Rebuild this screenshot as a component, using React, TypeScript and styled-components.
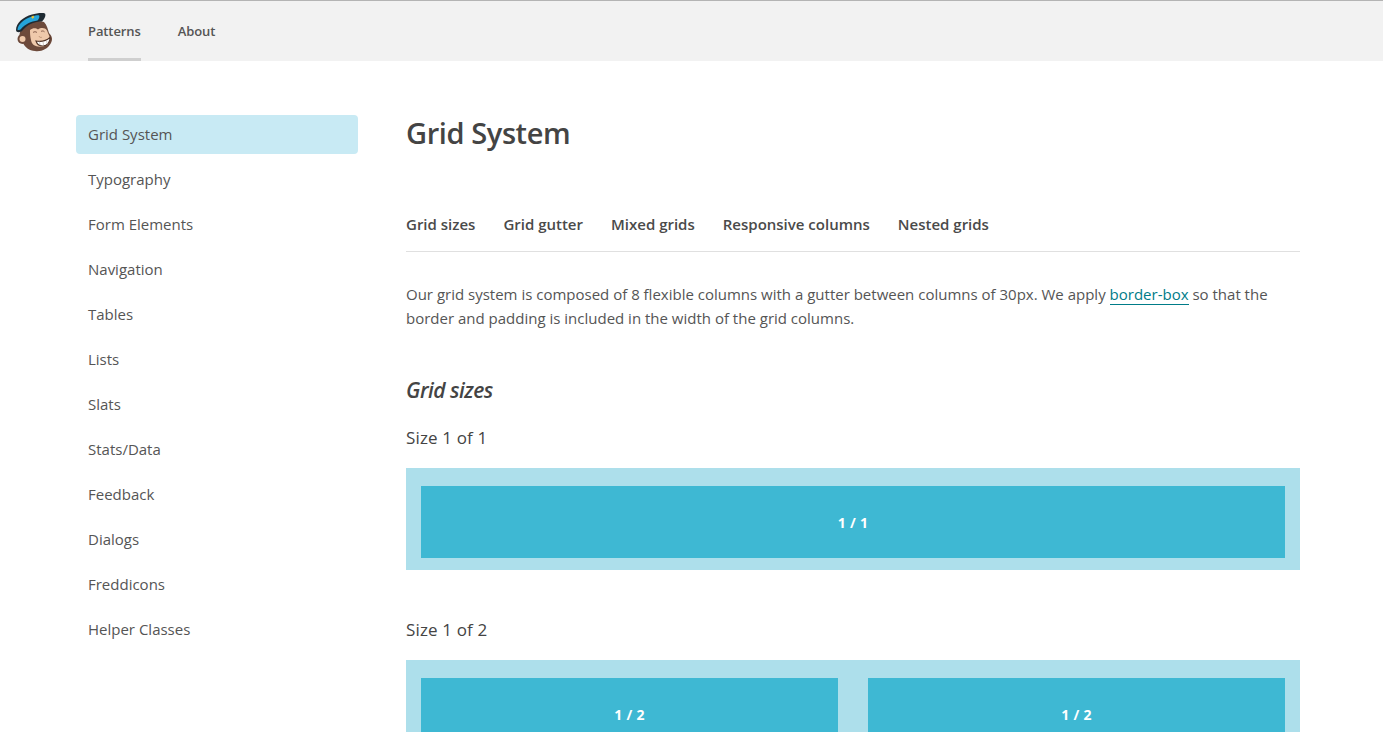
import React, { FC } from 'react';
import styled, { createGlobalStyle } from 'styled-components';

const GlobalStyle = createGlobalStyle`
  html, body {
    margin: 0;
    height: 100%;
    overflow: hidden;
    background: #fff;
    color: #444;
    font-family: "Open Sans", "Liberation Sans", sans-serif;
  }
  * { box-sizing: border-box; }
`;

const Header = styled.header`
  display: flex;
  align-items: stretch;
  height: 61px;
  padding-left: 15px;
  background: #f2f2f2;
  border-top: 1px solid #b4b4b4;
`;

const Logo = styled.svg`
  width: 38px;
  height: 40px;
  margin-top: 11px;
  margin-right: 35px;
  flex: none;
`;

const NavLink = styled.a<{ $active?: boolean }>`
  display: flex;
  align-items: center;
  height: 60px;
  margin-right: 37px;
  padding-top: 3px;
  font-size: 13px;
  font-weight: 600;
  letter-spacing: -0.1px;
  color: #555;
  border-bottom: 3px solid ${p => (p.$active ? '#cfcfcf' : 'transparent')};
`;

const Page = styled.div`
  display: flex;
  align-items: flex-start;
  gap: 48px;
  padding: 53px 83px 0 76px;
`;

const Sidebar = styled.nav`
  display: flex;
  flex-direction: column;
  gap: 6px;
  width: 282px;
  margin-top: 1px;
  flex: none;
`;

const SideItem = styled.a<{ $active?: boolean }>`
  display: flex;
  align-items: center;
  height: 39px;
  padding: 0 0 2px 12px;
  font-size: 15px;
  color: #555;
  border-radius: 4px;
  background: ${p => (p.$active ? '#c8eaf4' : 'transparent')};
`;

const Content = styled.main`
  flex: 1;
  min-width: 0;
`;

const Title = styled.h1`
  margin: 0;
  height: 38px;
  font-size: 29px;
  line-height: 38px;
  font-weight: 600;
  letter-spacing: -0.4px;
  color: #444;
`;

const Tabs = styled.div`
  display: flex;
  gap: 28px;
  margin-top: 53px;
  height: 47px;
  padding-top: 7px;
  border-bottom: 1px solid #e0e0e0;
`;

const Tab = styled.a`
  font-size: 15px;
  line-height: 24px;
  font-weight: 600;
  color: #4a4a4a;
`;

const Intro = styled.p`
  margin: 30px 0 0;
  font-size: 15px;
  line-height: 24px;
  color: #555;
`;

const Link = styled.a`
  color: #007c89;
  border-bottom: 1px solid #007c89;
`;

const SectionTitle = styled.h2`
  margin: 45px 0 0;
  font-size: 21px;
  line-height: 30px;
  font-weight: 600;
  font-style: italic;
  letter-spacing: -0.5px;
  color: #444;
`;

const SizeTitle = styled.h3`
  margin: 0;
  font-size: 17px;
  line-height: 24px;
  font-weight: 400;
  letter-spacing: 0.15px;
  color: #444;
`;

const Section = styled.section<{ $top: number }>`
  margin-top: ${p => p.$top}px;
`;

const Grid = styled.div`
  display: flex;
  gap: 30px;
  margin-top: 18px;
  padding: 18px 15px 12px;
  background: #addfeb;
`;

const Col = styled.div`
  flex: 1;
  display: flex;
  align-items: center;
  justify-content: center;
  height: 72px;
  font-size: 14px;
  font-weight: 700;
  letter-spacing: 0.3px;
  color: #fff;
  background: #3eb8d3;
`;

const sideLinks = [
  'Grid System',
  'Typography',
  'Form Elements',
  'Navigation',
  'Tables',
  'Lists',
  'Slats',
  'Stats/Data',
  'Feedback',
  'Dialogs',
  'Freddicons',
  'Helper Classes',
];

const tabs = ['Grid sizes', 'Grid gutter', 'Mixed grids', 'Responsive columns', 'Nested grids'];

const Freddie: FC = () => (
  <Logo viewBox="0 0 38 40">
    {/* head and ear */}
    <path d="M5 20C8 11 20 7 29 10c3 3 4 8 5 11 3 3 4 6 2 10-3 6-10 9-16 8-6 0-10-4-12-8C4 28 4 24 5 20z" fill="#6d4a3b" />
    <circle cx="7.500" cy="27" r="5" fill="#6d4a3b" />
    <circle cx="7.500" cy="27" r="3" fill="#efc9ab" />
    {/* face */}
    <path d="M15 18c3-2.500 6-2 8-.5 3-2 7-2 9 1 1 3 3 6 3 9-1 6-6 8-12 7-4-.5-6.500-3-7-6.500C15 24 15 21 15 18z" fill="#efc9ab" />
    <path d="M18 20.500c1.200-1 2.800-1 4 0M26 19.500c1-.8 2.600-.7 3.500.3" stroke="#8a6250" strokeWidth="1" fill="none" />
    <path d="M24 24c.3 1.300 1.500 1.700 2.800 1.300" stroke="#c09679" strokeWidth="1" fill="none" />
    {/* grin */}
    <path d="M21 29c5 1 10 0 14-3.500 .3 4.500-2.500 8-7 8.500-3.500.3-6-2-7-5z" fill="#fff" stroke="#4f3226" strokeWidth="1.100" />
    <path d="M24.500 29.500l.6 4M28 29.500l.6 4.300M31.500 28l.6 3.800" stroke="#b3a79f" strokeWidth=".6" />
    {/* cap */}
    <path d="M1 18C1 11 8 5 17 2.500c4-1 10-2 13-1 1 1.500 0 5-3 8-7-.5-15 3-20 9.500-1.500 1.500-6 2-6-1z" fill="#1f2b33" />
    <path d="M2.500 17.500C3 12 9 7 17 4.500c3-1 5-1.300 7-1.200 1 1.500 0 3.700-1.500 5.200C16 9.500 10 12 6 17c-1 1-3.500 1.500-3.500.5z" fill="#25a4d9" />
    <path d="M16 5l2.300-1.500 1 1.700-1.700 1.500z" fill="#f2c230" />
  </Logo>
);

const App: FC = () => (
  <>
    <GlobalStyle />
    <Header>
      <Freddie />
      <NavLink $active>Patterns</NavLink>
      <NavLink>About</NavLink>
    </Header>
    <Page>
      <Sidebar>
        {sideLinks.map((label, i) => (
          <SideItem key={label} $active={i === 0}>
            {label}
          </SideItem>
        ))}
      </Sidebar>
      <Content>
        <Title>Grid System</Title>
        <Tabs>
          {tabs.map(label => (
            <Tab key={label}>{label}</Tab>
          ))}
        </Tabs>
        <Intro>
          Our grid system is composed of 8 flexible columns with a gutter between columns of 30px. We apply{' '}
          <Link>border-box</Link> so that the border and padding is included in the width of the grid columns.
        </Intro>
        <SectionTitle>Grid sizes</SectionTitle>
        <Section $top={21}>
          <SizeTitle>Size 1 of 1</SizeTitle>
          <Grid>
            <Col>1 / 1</Col>
          </Grid>
        </Section>
        <Section $top={48}>
          <SizeTitle>Size 1 of 2</SizeTitle>
          <Grid>
            <Col>1 / 2</Col>
            <Col>1 / 2</Col>
          </Grid>
        </Section>
      </Content>
    </Page>
  </>
);

export default App;
